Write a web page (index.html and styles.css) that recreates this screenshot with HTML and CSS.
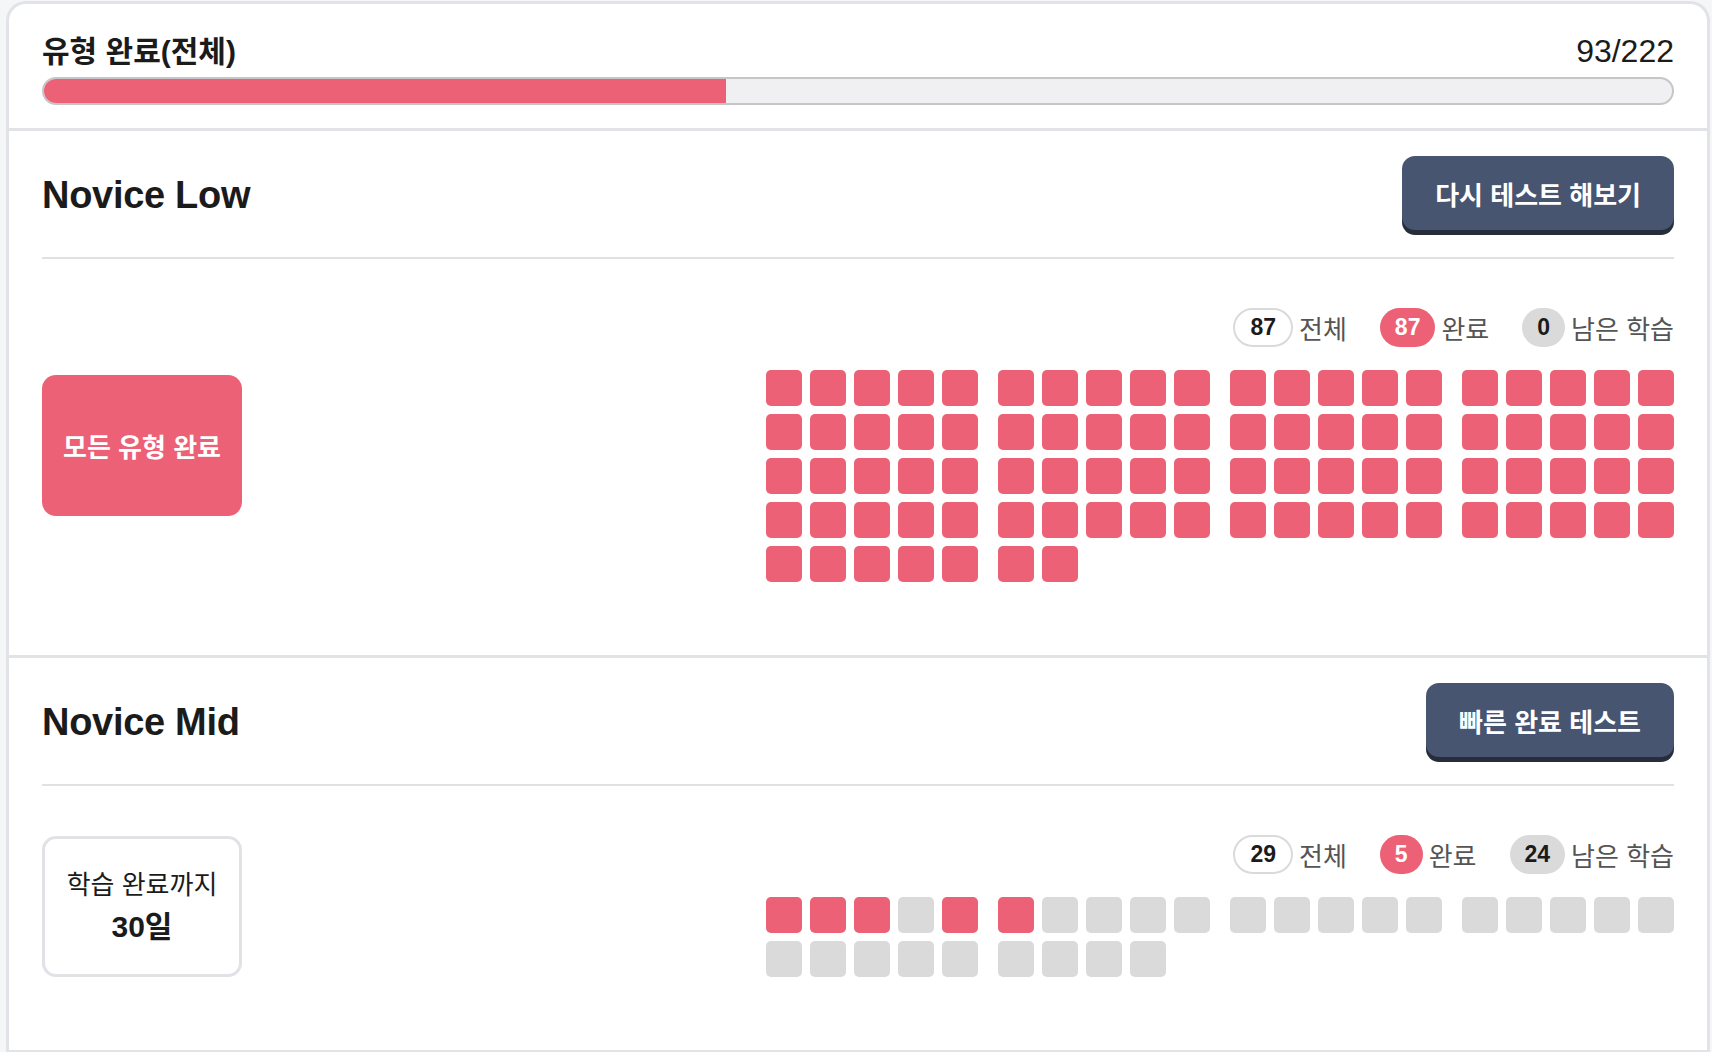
FILE: index.html
```html
<!DOCTYPE html>
<html lang="ko">
<head>
  <meta charset="UTF-8">
  <title>유형 완료</title>
  <link rel="stylesheet" href="styles.css">
</head>
<body>

  <div class="tarjeta">

    <div class="resumen">
      <div class="resumen-fila">
        <span class="resumen-titulo">유형 완료(전체)</span>
        <span class="resumen-cuenta">93/222</span>
      </div>
      <div class="barra">
        <div class="barra-relleno" style="width: 41.9%;"></div>
      </div>
    </div>

    <!-- Novice Low -->
    <div class="nivel">
      <div class="nivel-cabecera">
        <h2>Novice Low</h2>
        <button class="boton-oscuro">다시 테스트 해보기</button>
      </div>
      <div class="nivel-cuerpo">
        <div class="caja caja-completa">모든 유형 완료</div>
        <div class="progreso">
          <div class="leyenda">
            <span class="pastilla pastilla-borde">87</span><span class="etiqueta">전체</span>
            <span class="pastilla pastilla-rosa">87</span><span class="etiqueta">완료</span>
            <span class="pastilla pastilla-gris">0</span><span class="etiqueta">남은 학습</span>
          </div>
          <div class="cuadros" data-total="87" data-hechos="all"></div>
        </div>
      </div>
    </div>

    <!-- Novice Mid -->
    <div class="nivel">
      <div class="nivel-cabecera">
        <h2>Novice Mid</h2>
        <button class="boton-oscuro">빠른 완료 테스트</button>
      </div>
      <div class="nivel-cuerpo">
        <div class="caja caja-dias">
          <span>학습 완료까지</span>
          <strong>30일</strong>
        </div>
        <div class="progreso">
          <div class="leyenda">
            <span class="pastilla pastilla-borde">29</span><span class="etiqueta">전체</span>
            <span class="pastilla pastilla-rosa">5</span><span class="etiqueta">완료</span>
            <span class="pastilla pastilla-gris">24</span><span class="etiqueta">남은 학습</span>
          </div>
          <div class="cuadros" data-total="29" data-hechos="1,2,3,5,6"></div>
        </div>
      </div>
    </div>

  </div>

<script>
  document.querySelectorAll(".cuadros").forEach(grid => {
    const total = Number(grid.dataset.total);
    const hechos = grid.dataset.hechos === "all"
      ? null
      : grid.dataset.hechos.split(",").map(Number);

    for (let i = 1; i <= total; i++) {
      const sq = document.createElement("div");
      sq.className = "cuadro";
      if (hechos === null || hechos.includes(i)) {
        sq.classList.add("hecho");
      }
      grid.appendChild(sq);
    }
  });
</script>

</body>
</html>
```

FILE: styles.css
```css
body {
  margin: 0;
  background-color: #f5f6f8;
  font-family: "Liberation Sans", "Noto Sans CJK KR", sans-serif;
  color: #1b1b1b;
}

.tarjeta {
  margin: 1px 2px 0 6px;
  background-color: #fff;
  border: 3px solid #e2e3e7;
  border-bottom: none;
  border-radius: 20px 20px 0 0;
}

/* resumen de arriba */
.resumen {
  padding: 29px 33px 23px;
  border-bottom: 3px solid #e2e3e7;
}
.resumen-fila {
  display: flex;
  justify-content: space-between;
  align-items: baseline;
  line-height: 36px;
}
.resumen-titulo {
  font-size: 30px;
  font-weight: 700;
}
.resumen-cuenta {
  font-size: 32px;
}
.barra {
  margin-top: 7px;
  height: 24px;
  background-color: #f0f0f2;
  border: 2px solid #c6c6ca;
  border-radius: 14px;
  overflow: hidden;
}
.barra-relleno {
  height: 100%;
  background-color: #ed6176;
}

/* cada nivel */
.nivel {
  padding: 0 33px;
  border-bottom: 3px solid #e2e3e7;
}
.nivel-cabecera {
  display: flex;
  justify-content: space-between;
  align-items: center;
  padding: 25px 0 22px;
  border-bottom: 2px solid #e1e1e3;
}
.nivel-cabecera h2 {
  margin: 0;
  font-size: 38px;
  font-weight: 700;
  letter-spacing: -0.3px;
}
.boton-oscuro {
  height: 74px;
  margin-bottom: 5px;
  padding: 0 33px;
  background-color: #475570;
  color: #fff;
  border: none;
  border-radius: 13px;
  box-shadow: 0 5px 0 #262d3b;
  font-family: "Liberation Sans", "Noto Sans CJK KR", sans-serif;
  font-size: 26px;
  font-weight: 700;
  cursor: pointer;
}

.nivel-cuerpo {
  display: flex;
  justify-content: space-between;
  align-items: center;
  padding: 49px 0 73px;
}

.caja {
  box-sizing: border-box;
  width: 200px;
  height: 141px;
  border-radius: 14px;
  display: flex;
  flex-direction: column;
  justify-content: center;
  align-items: center;
  text-align: center;
}
.caja-completa {
  background-color: #ed6176;
  color: #fff;
  font-size: 26px;
  font-weight: 700;
}
.caja-dias {
  border: 3px solid #e2e2e6;
  font-size: 26px;
  line-height: 42px;
}
.caja-dias strong {
  font-size: 30px;
}

.progreso {
  display: flex;
  flex-direction: column;
  align-items: flex-end;
  gap: 23px;
}

.leyenda {
  display: flex;
  align-items: center;
}
.pastilla {
  box-sizing: border-box;
  height: 39px;
  padding: 0 15px;
  border-radius: 20px;
  display: flex;
  align-items: center;
  font-size: 23px;
  font-weight: 700;
}
.pastilla-borde {
  border: 2px solid #dadada;
}
.pastilla-rosa {
  background-color: #ed6176;
  color: #fff;
}
.pastilla-gris {
  background-color: #dadada;
}
.etiqueta {
  margin: 0 33px 0 6px;
  font-size: 26px;
  color: #555;
}
.etiqueta:last-child {
  margin-right: 0;
}

.cuadros {
  width: 908px;
  display: flex;
  flex-wrap: wrap;
  gap: 8px;
}
.cuadro {
  width: 36px;
  height: 36px;
  border-radius: 5px;
  background-color: #dadada;
}
.cuadro.hecho {
  background-color: #ed6176;
}
.cuadro:nth-child(5n) {
  margin-right: 12px;
}
.cuadro:nth-child(20n) {
  margin-right: 0;
}
```
